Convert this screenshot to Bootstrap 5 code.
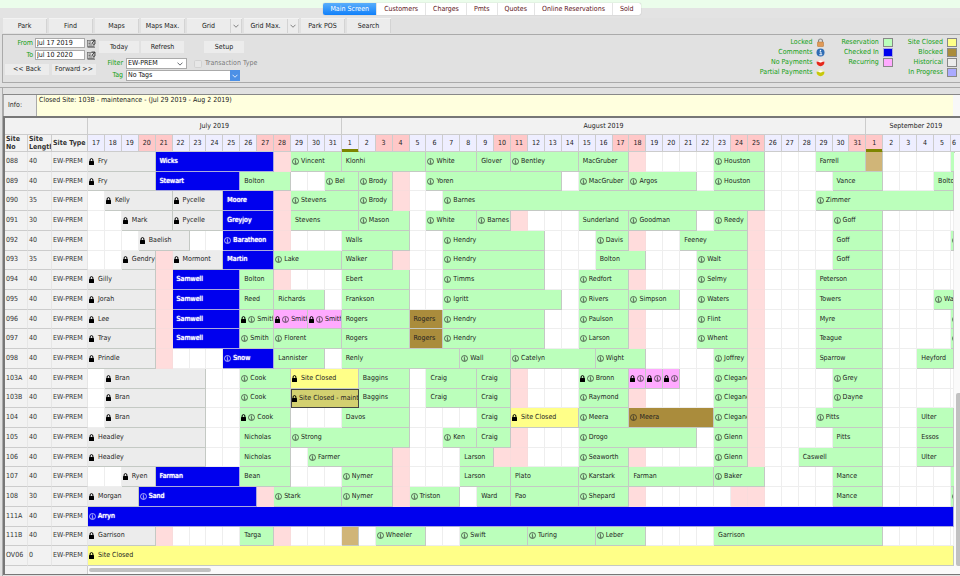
<!DOCTYPE html>
<html lang="en">
<head>
<meta charset="utf-8">
<meta name="viewport" content="width=device-width, initial-scale=1">
<title>Reservations - Main Screen</title>
<link rel="stylesheet" href="https://cdn.jsdelivr.net/npm/bootstrap@5.3.0/dist/css/bootstrap.min.css">
<style>
  :root { --panel: #e1e1e1; --key: #ececec; --label-green: #12a012; }
  body { font-family: "DejaVu Sans Condensed", "DejaVu Sans", sans-serif; font-size: 7px; line-height: 9px; color: #222; background: var(--panel); }
  svg { display: block; flex: none; }
  .tab-strip { background: linear-gradient(#ebfdeb 8px, #e3e3e3 8px); padding: 3px 0 3px 4px; }
  .tab-strip .nav { background: #fff; border-radius: 2px; box-shadow: 0 0 1px #999; }
  .tab-strip .nav-link { padding: 1px 7px; line-height: 10px; color: #5c1420; border-radius: 0; border-right: 1px solid #e4e4e4; }
  .tab-strip .nav-item:last-child .nav-link { border-right: 0; }
  .tab-strip .nav-link.active { background: linear-gradient(#5aaefb, #1080fa); color: #fff; border-radius: 2px 0 0 2px; }
  .btn { --bs-btn-font-size: 7px; --bs-btn-line-height: 9px; --bs-btn-padding-x: 0; --bs-btn-padding-y: 1px; --bs-btn-border-radius: 0; --bs-btn-bg: var(--key); --bs-btn-color: #222; --bs-btn-border-width: 0; width: 44px; }
  .tool-row { padding: 1px 3px; gap: 2px; }
  .tool-row .btn { height: 14px; border-right: 1px solid #d3d3d3; box-shadow: 0 -1px 0 #f3f3f3; }
  .tool-row .btn + .drop-key { margin-left: -2px; }
  .tool-row .drop-key { width: 11px; display: flex; align-items: center; justify-content: center; color: #666; }
  .filter-panel { margin-left: 2px; border: 1px solid #aaa; border-right: 0; padding: 2px 3px 0 2px; }
  .left-col { padding: 1px 0 7px; }
  .date-box { display: grid; grid-template-columns: 28px 50px 9px; column-gap: 2px; row-gap: 2px; align-items: center; }
  .green-label { color: var(--label-green); text-align: right; }
  .form-control, .form-select { font-size: 7px; line-height: 9px; min-height: 0; height: 10px; padding: 0 1px; border: 1px solid #aaa; border-radius: 0; color: #111; background-color: #fff; }
  .form-select { height: 11px; padding-right: 12px; background-size: 6px 6px; background-position: right 3px center; }
  .filter-select { width: 61px; }
  .tag-select { width: 114px; background-image: none; }
  .tag-cap { right: 0; top: 0; width: 10px; height: 11px; background: #4c90e6; pointer-events: none; }
  .form-check-input { width: 8px; height: 8px; margin: 0; border: 1px solid #c4c4c4; background: #eee; }
  .mid-col { margin-left: 3px; padding-top: 4px; }
  .mid-col .btn { width: 43px; height: 12px; }
  .mid-col .btn.slim { width: 40px; }
  .mid-col .green-label { width: 24px; }
  .mid-keys { gap: 2px; }
  .mid-line { gap: 3px; margin-top: 5px; }
  .mid-line + .mid-line { margin-top: 1px; }
  .setup-gap { margin-left: 18px; }
  .legend { display: grid; grid-template-columns: auto 10px; grid-auto-rows: 10px; column-gap: 4px; align-items: center; text-align: right; color: var(--label-green); align-content: start; }
  .swatch { width: 10px; height: 9px; border: 1px solid #888; }
  .legend-gap { gap: 15px; }
  .divide { height: 5px; border-bottom: 1px solid #aaa; }
  .main-panel { margin-left: 2px; border-left: 1px solid #aaa; padding: 6px 0 1px; }
  .info-row { min-height: 22px; border-top: 1px solid #888; background: #f8f8f8; }
  .info-label { width: 34px; padding: 1px 4px; background: var(--key); border-left: 1px solid #aaa; border-right: 1px solid #aaa; display: flex; align-items: center; }
  .info-text { background: #ffffde; margin-right: 7px; padding: 1px 2px; }
  .calendar { border: 2px solid #777; border-right: 0; border-bottom-width: 1px; background: #fff; font-size: 7px; }
  .cal-table thead, .cal-table tbody { min-width: 0; }
  .cal-table tr { display: grid; grid-template-columns: 23px 24px 36px repeat(51, minmax(0, 1fr)) 3px; min-width: 0; }
  .cal-table thead tr { grid-template-columns: 23px 24px 36px repeat(51, minmax(0, 1fr)) 9px; background: #f2f2f2; height: 17px; }
  .cal-table th, .cal-table td { overflow: hidden; white-space: nowrap; min-width: 0; display: flex; align-items: center; padding: 0; }
  .cal-table thead th { font-weight: 400; justify-content: center; border-right: 1px solid #ccc; border-bottom: 1px solid #ccc; }
  .cal-table thead .col-title { font-weight: 700; white-space: normal; line-height: 8px; justify-content: flex-start; padding-left: 1px; background: #f2f2f2; color: #333; }
  .cal-table thead .day-head { background: #eeeeff; }
  .cal-table thead .rest-head { background: #ffc8c8; }
  .cal-table thead .marked { box-shadow: inset 0 -2px 0 #7d8500; border-bottom-color: #7d8500; }
  .cal-table thead .last-head { justify-content: flex-start; border-right: 0; padding-left: 1px; }
  .cal-table thead .sept { justify-content: flex-start; padding-left: 23px; border-right: 0; }
  .cal-table tbody { display: grid; grid-auto-rows: minmax(13px, 1fr); margin-right: 6px; }
  .cal-table .site-cell { background: #f2f2f2; color: #333; font-weight: 400; padding-left: 1px; border-bottom: 1px solid #ccc; border-right: 1px solid #e6e6e6; }
  .cal-table .free { border-right: 1px solid #eee; border-bottom: 1px solid #eee; }
  .cal-table .rest { background: #ffdcdc; border-color: #f9dcdc; }
  .stay { border: solid #c4c9c4; border-width: 0 1px 1px 0; color: #222; }
  .cal-table .stay.plain { padding-left: 3px; }
  .stay svg { margin: 0 1px; }
  .stay .alone { margin-right: 3px; }
  .stay span { margin-left: 1px; }
  .k-G { background: #bbffbb; } .k-H { background: #ececec; } .k-Y { background: #ffff88; }
  .k-P { background: #ffaaff; } .k-N { background: #aa8c3c; } .k-T { background: #d0b578; }
  .k-I { background: #aaaaff; }
  .k-B { background: #0000ee; color: #fff; border-color: #aaaadd; text-shadow: 0 0 1px #fff, 0 0 1px #fff; }
  .k-S { background: #d3d070; border: 1px solid #444; }
  .k-S .alone { margin: 0 1px 0 0; }
  .h-track { background: #fafafa; height: 8px; display: grid; grid-template-columns: 83px 1fr; align-items: center; }
  .h-track .rows-foot { background: #f2f2f2; border-right: 1px solid #ccc; height: 100%; }
  .h-thumb { width: 14%; height: 4px; margin-left: 1px; border-radius: 2px; background: #c1c1c1; }
  .v-track { right: 0; top: 35px; bottom: 0; width: 6px; background: #fafafa; }
  .v-thumb { right: 0; width: 4px; top: 57%; bottom: 2%; background: #c1c1c1; border-radius: 2px 0 0 2px; }
</style>
<script src="https://cdn.jsdelivr.net/npm/bootstrap@5.3.0/dist/js/bootstrap.bundle.min.js"></script>
</head>
<body class="d-flex flex-column min-vh-100 overflow-hidden">
<svg width="0" height="0" class="position-absolute" aria-hidden="true">
  <symbol id="lock" viewBox="0 0 10 14"><path d="M2.200 7V4a2.800 2.800 0 0 1 5.600 0v3" fill="none" stroke="#000" stroke-width="2"/><rect x="0" y="6" width="10" height="8" rx="1" fill="#000"/></symbol>
  <symbol id="info" viewBox="0 0 14 14"><circle cx="7" cy="7" r="6" fill="none" stroke="currentColor" stroke-width="1.3"/><circle cx="7" cy="3.9" r="1" fill="currentColor"/><path d="M5.4 6.2h1.8v4.2M5.2 10.6h3.8" fill="none" stroke="currentColor" stroke-width="1.2"/></symbol>
  <symbol id="pick" viewBox="0 0 18 18"><rect x="1" y="3" width="13" height="12" fill="#ddd" stroke="#666" stroke-width="1.4"/><path d="M1 16.500h15M3 6h5M3 9h4M3 12h8M9 9h3" stroke="#444" stroke-width="1.4"/><path d="M9 2h7v8l-4 2M16 2l-6 6" fill="none" stroke="#333" stroke-width="1.6"/></symbol>
  <symbol id="chev" viewBox="0 0 12 8"><path d="M1 1.5l5 5 5-5" fill="none" stroke="currentColor" stroke-width="1.6"/></symbol>
</svg>

<header class="tab-strip d-flex justify-content-center">
  <ul class="nav flex-nowrap">
    <li class="nav-item"><a class="nav-link active" href="#">Main Screen</a></li>
    <li class="nav-item"><a class="nav-link" href="#">Customers</a></li>
    <li class="nav-item"><a class="nav-link" href="#">Charges</a></li>
    <li class="nav-item"><a class="nav-link" href="#">Pmts</a></li>
    <li class="nav-item"><a class="nav-link" href="#">Quotes</a></li>
    <li class="nav-item"><a class="nav-link" href="#">Online Reservations</a></li>
    <li class="nav-item"><a class="nav-link" href="#">Sold</a></li>
  </ul>
</header>

<div class="tool-row d-flex">
  <button class="btn" type="button">Park</button>
  <button class="btn" type="button">Find</button>
  <button class="btn" type="button">Maps</button>
  <button class="btn" type="button">Maps Max.</button>
  <button class="btn" type="button">Grid</button>
  <button class="btn drop-key" type="button" aria-label="Grid options"><svg width="6" height="4"><use href="#chev"/></svg></button>
  <button class="btn" type="button">Grid Max.</button>
  <button class="btn drop-key" type="button" aria-label="Grid Max. options"><svg width="6" height="4"><use href="#chev"/></svg></button>
  <button class="btn" type="button">Park POS</button>
  <button class="btn" type="button">Search</button>
</div>

<section class="filter-panel d-flex align-items-start">
  <div class="left-col">
    <div class="date-box">
      <label class="green-label" for="from">From</label><input class="form-control" id="from" value="Jul 17 2019"><svg width="9" height="9"><use href="#pick"/></svg>
      <label class="green-label" for="to">To</label><input class="form-control" id="to" value="Jul 10 2020"><svg width="9" height="9"><use href="#pick"/></svg>
    </div>
    <div class="d-flex justify-content-between pt-1">
      <button class="btn" type="button">&lt;&lt; Back</button>
      <button class="btn" type="button">Forward &gt;&gt;</button>
    </div>
  </div>
  <div class="mid-col">
    <div class="mid-keys d-flex">
      <button class="btn slim" type="button">Today</button>
      <button class="btn" type="button">Refresh</button>
      <button class="btn slim setup-gap" type="button">Setup</button>
    </div>
    <div class="mid-line d-flex align-items-center">
      <label class="green-label" for="filter">Filter</label>
      <select class="form-select filter-select" id="filter"><option>EW-PREM</option></select>
      <input class="form-check-input ms-1" type="checkbox" id="trans" disabled>
      <label for="trans" class="text-black-50">Transaction Type</label>
    </div>
    <div class="mid-line d-flex align-items-center">
      <label class="green-label" for="tag">Tag</label>
      <div class="position-relative">
        <select class="form-select tag-select" id="tag"><option>No Tags</option></select>
        <span class="tag-cap position-absolute text-white d-flex align-items-center justify-content-center"><svg width="6" height="4"><use href="#chev"/></svg></span>
      </div>
    </div>
  </div>
  <div class="legend-gap d-flex ms-auto">
    <div class="legend">
      <span>Locked</span><svg width="9" height="9" viewBox="0 0 18 18"><path d="M5 9V6a4 4 0 0 1 8 0v3" fill="none" stroke="#888" stroke-width="2.4"/><rect x="3" y="8" width="12" height="9" rx="1" fill="#e09a58" stroke="#b8702c"/></svg>
      <span>Comments</span><svg width="9" height="9" viewBox="0 0 18 18"><circle cx="9" cy="9" r="8" fill="#2f6cb4"/><circle cx="9" cy="5" r="1.5" fill="#fff"/><path d="M7 8h3v5M6.500 13.500h6" fill="none" stroke="#fff" stroke-width="1.8"/></svg>
      <span>No Payments</span><svg width="9" height="9" viewBox="0 0 18 18"><circle cx="9" cy="9" r="7.500" fill="#f6dcd8"/><path d="M1.500 7q7.500 3 15 0a7.700 7.700 0 1 1-15 0" fill="#e5281c"/><ellipse cx="9" cy="7" rx="3" ry="2" fill="#fff"/></svg>
      <span>Partial Payments</span><svg width="9" height="9" viewBox="0 0 18 18"><circle cx="9" cy="9" r="7.500" fill="#f0f0cc"/><path d="M1.500 7q7.500 3 15 0a7.700 7.700 0 1 1-15 0" fill="#c8c80c"/><ellipse cx="9" cy="7" rx="3" ry="2" fill="#fff"/></svg>
    </div>
    <div class="legend">
      <span>Reservation</span><span class="swatch k-G"></span>
      <span>Checked In</span><span class="swatch k-B"></span>
      <span>Recurring</span><span class="swatch k-P"></span>
    </div>
    <div class="legend">
      <span>Site Closed</span><span class="swatch k-Y"></span>
      <span>Blocked</span><span class="swatch k-N"></span>
      <span>Historical</span><span class="swatch k-H"></span>
      <span>In Progress</span><span class="swatch k-I"></span>
    </div>
  </div>
</section>
<div class="divide"></div>

<main class="main-panel d-flex flex-column flex-grow-1">
  <div class="info-row d-flex">
    <div class="info-label">Info:</div>
    <div class="info-text flex-grow-1">Closed Site: 103B - maintenance - (Jul 29 2019 - Aug 2 2019)</div>
  </div>
  <div class="calendar position-relative d-flex flex-column flex-grow-1">
    <table class="cal-table d-flex flex-column flex-grow-1">
      <thead class="d-block">
        <tr id="months"></tr>
        <tr id="days"></tr>
      </thead>
      <tbody class="flex-grow-1" id="sites"></tbody>
    </table>
    <div class="h-track"><div class="rows-foot"></div><div class="h-thumb"></div></div>
    <div class="v-track position-absolute"><div class="v-thumb position-absolute"></div></div>
  </div>
</main>

<script>
  // Day 0 is Jul 17 2019; the last column (51, Sep 6) is cut by the scroll bar.
  const DAYS = 52;
  const isRest = d => d % 7 === 3 || d % 7 === 4;
  const dayLabel = d => d < 15 ? d + 17 : d < 46 ? d - 14 : d - 45;

  // Site | length | stays. A stay is: kind, first day, nights, icons (l = lock, i = comment), name.
  // Kinds: G reservation, B checked in, H historical, P recurring, Y closed, S selected, N blocked, T tentative.
  const SITES = `
088|40|H 0 4 l Fry;B 4 7 - Wicks;G 12 3 i Vincent;G 15 5 - Klonhi;G 20 3 i White;G 23 2 - Glover;G 25 4 i Bentley;G 29 3 - MacGruber;G 37 3 i Houston;G 43 3 - Farrell;T 46 1 -;G 51 1 -
089|40|H 0 4 l Fry;B 4 5 - Stewart;G 9 3 - Bolton;G 14 2 i Bel;G 16 2 i Brody;G 20 8 i Yoren;G 29 3 i MacGruber;G 32 4 i Argos;G 37 3 i Houston;G 44 3 - Vance;G 50 2 - Bolto
090|35|H 1 4 l Kelly;H 5 3 l Pycelle;B 8 3 - Moore;G 12 4 i Stevens;G 16 2 i Brody;G 21 19 i Barnes;G 43 9 i Zimmer
091|30|H 2 3 l Mark;H 5 3 l Pycelle;B 8 3 - Greyjoy;G 12 4 - Stevens;G 16 3 i Mason;G 20 3 i White;G 23 2 i Barnes;G 29 3 - Sunderland;G 32 4 i Goodman;G 37 2 i Reedy;G 44 3 i Goff
092|40|H 3 3 l Baelish;B 8 3 i Baratheon;G 15 4 - Walls;G 21 6 i Hendry;G 30 2 i Davis;G 35 4 - Feeney;G 44 3 - Goff;G 51 1 i
093|35|H 2 2 l Gendry;H 5 3 l Mormont;B 8 3 - Martin;G 11 4 i Lake;G 15 3 - Walker;G 21 6 i Hendry;G 30 3 - Bolton;G 36 3 i Walt;G 44 3 - Goff
094|40|H 0 4 l Gilly;B 5 4 - Samwell;G 9 2 - Bolton;G 15 4 - Ebert;G 21 6 i Timms;G 29 3 i Redfort;G 36 3 i Selmy;G 43 4 - Peterson
095|40|H 0 4 l Jorah;B 5 4 - Samwell;G 9 2 - Reed;G 11 3 - Richards;G 15 4 - Frankson;G 21 7 i Igritt;G 29 3 i Rivers;G 32 3 i Simpson;G 36 3 i Waters;G 43 4 - Towers;G 50 2 i Wa
096|40|H 0 4 l Lee;B 5 4 - Samwell;G 9 2 li Smith;P 11 2 li Smith;P 13 2 li Smith;G 15 4 - Rogers;N 19 2 - Rogers;G 21 6 i Hendry;G 29 3 i Paulson;G 36 3 i Flint;G 43 4 - Myre;G 51 1 i
097|40|H 0 4 l Tray;B 5 4 - Samwell;G 9 2 i Smith;G 11 4 i Florent;G 15 4 - Rogers;N 19 2 - Rogers;G 21 6 i Hendry;G 29 3 i Larson;G 36 3 i Whent;G 43 4 - Teague;G 51 1 i
098|40|H 0 4 l Prindle;B 8 3 i Snow;G 11 3 - Lannister;G 15 7 - Renly;G 22 3 i Wall;G 25 5 i Catelyn;G 30 3 i Wight;G 37 2 i Joffrey;G 43 4 - Sparrow;G 49 3 - Heyford
103A|40|H 1 6 l Bran;G 9 3 i Cook;Y 12 4 l Site Closed;G 16 3 - Baggins;G 20 3 - Craig;G 23 2 - Craig;G 29 3 li Bronn;P 32 1 li;P 33 1 li;P 34 1 li;G 37 2 i Clegane;G 44 3 i Grey
103B|40|H 1 6 l Bran;G 9 3 i Cook;S 12 4 l Site Closed - maint;G 16 3 - Baggins;G 20 3 - Craig;G 23 2 - Craig;G 29 3 i Raymond;G 37 2 i Clegane;G 44 3 i Dayne
104|40|H 1 6 l Bran;G 9 3 li Cook;G 15 4 - Davos;G 23 2 - Craig;Y 25 4 l Site Closed;G 29 3 i Meera;N 32 5 i Meera;G 37 2 i Clegane;G 43 4 i Pitts;G 49 3 - Ulter
105|40|H 0 7 l Headley;G 9 3 - Nicholas;G 12 7 i Strong;G 21 2 i Ken;G 23 2 - Craig;G 29 7 i Drogo;G 37 2 i Glenn;G 44 3 - Pitts;G 49 3 - Essos
106|40|H 0 7 l Headley;G 9 3 - Nicholas;G 13 5 i Farmer;G 22 2 - Larson;G 29 3 i Seaworth;G 37 2 i Glenn;G 42 5 - Caswell;G 49 3 - Ulter
107|40|H 2 2 l Ryen;B 4 5 - Farman;G 9 3 - Bean;G 15 3 i Nymer;G 22 3 - Larson;G 25 4 - Plato;G 29 3 i Karstark;G 32 5 - Farman;G 37 3 i Baker;G 44 3 - Mance;G 51 1 -
108|30|H 0 3 l Morgan;B 3 7 i Sand;G 11 4 i Stark;G 15 3 i Nymer;G 19 3 i Triston;G 23 2 - Ward;G 25 4 - Pao;G 29 3 i Shepard;G 44 3 - Mance;G 51 1 i
111A|40|B 0 52 i Arryn
111B|40|H 0 4 l Garrison;G 9 2 - Targa;T 15 1 -;G 17 3 i Wheeler;G 22 4 i Swift;G 26 4 i Turing;G 30 3 i Leber;G 37 10 - Garrison
OV06|0|Y 0 52 l Site Closed`.trim().split('\n');

  const cell = (tag, cls, html, span = 1) => {
    const el = document.createElement(tag);
    el.className = cls;
    el.innerHTML = html;
    if (span > 1) { el.colSpan = span; el.style.gridColumn = `span ${span}`; }
    return el;
  };
  const lock = alone => `<svg class="${alone ? 'alone' : ''}" width="5" height="7"><use href="#lock"/></svg>`;
  const info = '<svg width="7" height="7"><use href="#info"/></svg>';

  document.getElementById('months').append(
    cell('th', '', '', 3), cell('th', '', 'July 2019', 15),
    cell('th', '', 'August 2019', 31), cell('th', 'sept', 'September 2019', 6));

  const days = document.getElementById('days');
  ['Site No', 'Site Length', 'Site Type'].forEach(t => days.append(cell('th', 'col-title', t)));
  for (let d = 0; d < DAYS; d++) {
    const cls = ['day-head', isRest(d) && 'rest-head', (d === 15 || d === 46) && 'marked', d === 51 && 'last-head'];
    days.append(cell('th', cls.filter(Boolean).join(' '), dayLabel(d)));
  }

  for (const line of SITES) {
    const [site, length, list] = line.split('|');
    const row = document.createElement('tr');
    row.append(cell('th', 'site-cell', site), cell('td', 'site-cell', length), cell('td', 'site-cell', 'EW-PREM'));
    let day = 0;
    const freeTo = end => { for (; day < end; day++) row.append(cell('td', 'free' + (isRest(day) ? ' rest' : ''), '')); };
    for (const stay of list.split(';')) {
      const [kind, start, nights, icons, ...name] = stay.split(' ');
      freeTo(+start);
      const marks = (icons.includes('l') ? lock(icons === 'l') : '') + (icons.includes('i') ? info : '');
      const text = name.length ? `<span>${name.join(' ')}</span>` : '';
      row.append(cell('td', `stay k-${kind}${icons === '-' ? ' plain' : ''}`, marks + text, +nights));
      day += +nights;
    }
    freeTo(DAYS);
    document.getElementById('sites').append(row);
  }
</script>
</body>
</html>
